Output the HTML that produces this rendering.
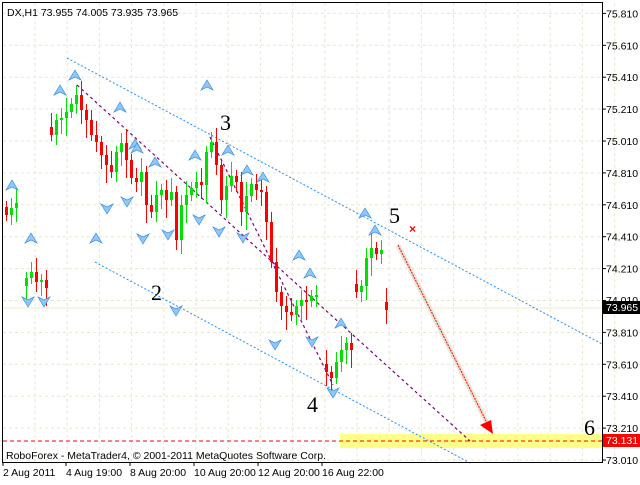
<!DOCTYPE html><html><head><style>
body{margin:0;background:#fff;width:640px;height:480px;overflow:hidden;font-family:"Liberation Sans",sans-serif}
svg text{font-family:"Liberation Sans",sans-serif;font-size:10.5px;fill:#000}
.n{font-family:"Liberation Serif",serif;font-size:22px}
</style></head><body>
<svg id="s" width="640" height="480" xmlns="http://www.w3.org/2000/svg">
<rect width="640" height="480" fill="#fff"/>
<g id="grid" stroke="#e8e8c8" stroke-dasharray="3,3" stroke-width="1"></g>
<line x1="3" y1="308" x2="602" y2="308" stroke="#eeeecc"/>
<rect x="340" y="434" width="262" height="14" fill="#ffff88"/>
<line x1="3" y1="441" x2="602" y2="441" stroke="#f00" stroke-dasharray="4,3"/>
<g stroke="#1e90ff" stroke-dasharray="2,2" stroke-width="1">
<line x1="67" y1="58" x2="602" y2="344"/>
<line x1="95" y1="262" x2="470" y2="463"/>
</g>
<g stroke="#800080" stroke-dasharray="3,3" stroke-width="1.2">
<line x1="77" y1="85" x2="470" y2="441"/>
<line x1="210" y1="137" x2="333" y2="385"/>
</g>
<g id="c"></g>
<g id="ar"></g>
<line x1="398" y1="245" x2="488" y2="425" stroke="#e8e8d8" stroke-width="5"/>
<line x1="398" y1="245" x2="488" y2="425" stroke="#f00" stroke-dasharray="2,1"/>
<polygon points="493,434 480,425 491,420" fill="#f00"/>
<text x="409" y="233" style="fill:#f00;font-size:12px;font-weight:bold">×</text>
<text class="n" x="220" y="130">3</text>
<text class="n" x="151" y="300">2</text>
<text class="n" x="307" y="412">4</text>
<text class="n" x="389" y="223">5</text>
<text class="n" x="584" y="435">6</text>
<text x="7" y="16">DX,H1  73.955 74.005 73.935 73.965</text>
<text x="6" y="459">RoboForex - MetaTrader4, © 2001-2011 MetaQuotes Software Corp.</text>
<line x1="2.5" y1="2" x2="2.5" y2="463" stroke="#000"/>
<line x1="2" y1="2.5" x2="602" y2="2.5" stroke="#000"/>
<line x1="602.5" y1="2" x2="602.5" y2="463" stroke="#000"/>
<line x1="2" y1="462.5" x2="603" y2="462.5" stroke="#000"/>
<g id="ax"></g>
<rect x="603" y="301" width="37" height="13" fill="#000"/>
<text x="606" y="311" style="fill:#fff">73.965</text>
<rect x="603" y="434" width="37" height="13" fill="#f00"/>
<text x="606" y="444" style="fill:#fff">73.131</text>
<text x="3" y="476">2 Aug 2011</text>
<text x="66" y="476">4 Aug 19:00</text>
<text x="130" y="476">8 Aug 20:00</text>
<text x="194" y="476">10 Aug 20:00</text>
<text x="258" y="476">12 Aug 20:00</text>
<text x="322" y="476">16 Aug 22:00</text>
</svg>
<script>
(function(){
var NS="http://www.w3.org/2000/svg";
function el(p,t,a){var e=document.createElementNS(NS,t);for(var k in a)e.setAttribute(k,a[k]);document.getElementById(p).appendChild(e);return e;}
for(var i=0;i<19;i++){var x=35+i*32.2;el("grid","line",{x1:x,y1:3,x2:x,y2:462});}
for(var i=0;i<15;i++){var y=460-i*31.9;el("grid","line",{x1:3,y1:y,x2:602,y2:y});
 var p=(73.01+i*0.2).toFixed(3);if(i!=5)el("ax","text",{x:606,y:y+4}).textContent=p;
 el("ax","line",{x1:602,y1:y,x2:606,y2:y,stroke:"#000"});}
el("ax","text",{x:606,y:304}).textContent="74.010";
[3,66,130,194,258,322].forEach(function(x){el("ax","line",{x1:x,y1:462,x2:x,y2:466,stroke:"#000"})});
var P=[[5,215],[10,208],[15,203],[25,278],[30,272],[35,282],[40,280],[45,288],
[50,135],[55,120],[60,118],[65,112],[70,104],[75,95],[80,110],[85,120],[90,135],[95,142],[100,155],[105,165],[110,172],[115,152],[120,143],[125,160],[130,178],[135,182],[140,172],[145,205],[150,212],[155,195],[160,190],[165,200],[170,192],[175,240],[180,205],[185,195],[190,188],[195,182],[200,185],[205,152],[210,142],[215,165],[220,200],[225,186],[230,176],[235,182],[240,212],[245,196],[250,184],[255,190],[260,192],[265,222],[270,262],[275,292],[280,306],[285,312],[290,315],[295,306],[300,300],[305,301],[310,296],[315,295],[325,372],[330,378],[335,362],[340,350],[345,343],[350,350],[355,292],[360,286],[365,258],[370,248],[375,254],[380,250],[385,310]];
var gaps={50:1,325:1,355:1,385:1,25:1};
for(var i=0;i<P.length;i++){var x=P[i][0],c=P[i][1],o=i>0?P[i-1][1]:c+6;if(i==0||gaps[x])o=c+(i%2?8:-8);
 var up=c<o,t1=Math.min(o,c),b1=Math.max(o,c);if(b1-t1<2)b1=t1+2;
 var col=up?"#00e000":"#f00";
 el("c","line",{x1:x+1.5,y1:t1-6-(i%3)*4,x2:x+1.5,y2:b1+6+(i%4)*4,stroke:col});
 el("c","rect",{x:x,y:t1,width:3,height:b1-t1,fill:col});}
function upA(x,y){el("ar","path",{d:"M"+x+" "+y+"l-6 10l6-3l6 3z",fill:"#8ec8ff",stroke:"#3c8cdc","stroke-width":0.7});}
function dnA(x,y){el("ar","path",{d:"M"+x+" "+y+"l-6-10l6 3l6-3z",fill:"#8ec8ff",stroke:"#3c8cdc","stroke-width":0.7});}
[[12,180],[31,233],[60,85],[75,70],[120,102],[135,139],[155,157],[195,150],[207,80],[228,145],[247,165],[263,172],[299,250],[310,268],[341,318],[365,208],[375,225],[96,233],[137,143]].forEach(function(a){upA(a[0],a[1])});
[[28,307],[44,307],[107,214],[127,207],[143,244],[176,316],[199,225],[219,237],[243,243],[275,350],[312,347],[333,398],[168,240]].forEach(function(a){dnA(a[0],a[1])});
})();
</script>
</body></html>
